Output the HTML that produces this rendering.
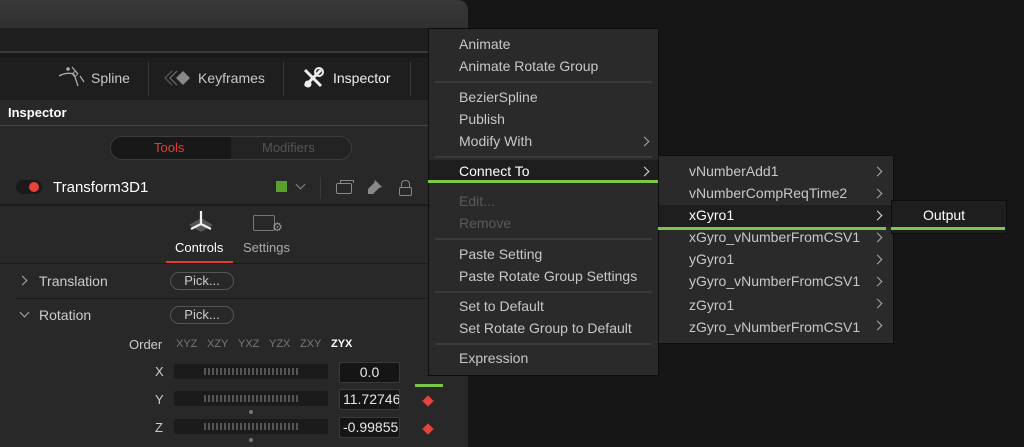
<!DOCTYPE html>
<html><head><style>
*{margin:0;padding:0;box-sizing:border-box}
body{width:1024px;height:447px;background:#161616;font-family:"Liberation Sans",sans-serif;position:relative;overflow:hidden;color:#ccc}
.a{position:absolute}
.t{position:absolute;font-size:14px;white-space:nowrap}
.menu{position:absolute;background:#2a2a2a;border:1px solid #0e0e0e}
.mi{position:absolute;font-size:14px;color:#c8c8c8;white-space:nowrap}
.sep{position:absolute;height:2px;background:#3a3a3a}
.chev{position:absolute;width:7px;height:7px;border-right:1.5px solid #aaa;border-top:1.5px solid #aaa;transform:rotate(45deg)}
.slider{position:absolute;left:174px;width:154px;height:15px;background:#1b1b1b;border-radius:2px}
.slider::after{content:"";position:absolute;left:30px;right:30px;top:4px;height:7px;background:repeating-linear-gradient(90deg,#555 0 2px,transparent 2px 4px)}
.num{position:absolute;left:339px;width:61px;height:21px;background:#151515;border:1px solid #3a3a3a;border-radius:2px;color:#e8e8e8;font-size:14px;padding-left:3px;line-height:19px;overflow:hidden;white-space:nowrap}
.ord{position:absolute;top:338px;font-size:11px;color:#777}
</style></head><body>
<div class="a" style="left:0;top:0;width:468px;height:28px;background:linear-gradient(#393939,#303030);border-top-right-radius:10px"></div>
<div class="a" style="left:0;top:28px;width:468px;height:24px;background:#1f1f1f"></div>
<div class="a" style="left:0;top:51px;width:468px;height:2px;background:#3a3a3a"></div>
<div class="a" style="left:0;top:53px;width:468px;height:5px;background:#191919"></div>
<div class="a" style="left:0;top:58px;width:468px;height:42px;background:#1e1e1e"></div>
<div class="a" style="left:0;top:100px;width:468px;height:347px;background:#282828"></div>
<!-- toolbar -->
<svg class="a" style="left:58px;top:64px" width="28" height="28" viewBox="0 0 28 28"><path d="M1 12 Q8 8 16 10 M16 10 L20 22 M14 3 L20 10 M22 12 L26 18" stroke="#aaa" stroke-width="1.3" fill="none"/><circle cx="10" cy="5" r="1.8" fill="#aaa"/><circle cx="17" cy="10" r="2.2" fill="none" stroke="#aaa"/></svg>
<div class="t" style="left:91px;top:70px;color:#c8c8c8">Spline</div>
<div class="a" style="left:148px;top:62px;width:1px;height:34px;background:#3a3a3a"></div>
<svg class="a" style="left:164px;top:70px" width="30" height="16" viewBox="0 0 30 16"><path d="M8 1 L1 8 L8 15" stroke="#555" fill="none" stroke-width="1.3"/><path d="M13 1 L6 8 L13 15" stroke="#666" fill="none" stroke-width="1.3"/><path d="M19 1 L26 8 L19 15 L12 8Z" fill="#888"/></svg>
<div class="t" style="left:198px;top:70px;color:#c8c8c8">Keyframes</div>
<div class="a" style="left:283px;top:62px;width:1px;height:34px;background:#3a3a3a"></div>
<svg class="a" style="left:302px;top:67px" width="22" height="22" viewBox="0 0 22 22"><path d="M3 3 L19 19 M19 3 L3 19" stroke="#eee" stroke-width="3"/><circle cx="17" cy="5" r="4" fill="none" stroke="#eee" stroke-width="2"/><circle cx="6" cy="17" r="3.5" fill="#eee"/></svg>
<div class="t" style="left:333px;top:70px;color:#eee">Inspector</div>
<div class="a" style="left:410px;top:62px;width:1px;height:34px;background:#3a3a3a"></div>
<!-- header -->
<div class="t" style="left:8px;top:105px;color:#fff;font-weight:bold;font-size:13px">Inspector</div>
<div class="a" style="left:0;top:125px;width:468px;height:1px;background:#8a2a22"></div>
<div class="a" style="left:110px;top:136px;width:242px;height:24px;border:1px solid #3c3c3c;border-radius:12px;background:#232323"></div>
<div class="a" style="left:111px;top:137px;width:120px;height:22px;border-radius:11px 0 0 11px;background:#181818"></div>
<div class="t" style="left:154px;top:140px;color:#e0402f;font-size:13px">Tools</div>
<div class="t" style="left:262px;top:140px;color:#555;font-size:13px">Modifiers</div>
<div class="a" style="left:16px;top:180px;width:26px;height:14px;border-radius:7px;background:#1a1a1a"></div>
<div class="a" style="left:29px;top:182px;width:10px;height:10px;border-radius:5px;background:#e8433a"></div>
<div class="t" style="left:53px;top:179px;color:#fff;font-size:15px">Transform3D1</div>
<div class="a" style="left:276px;top:181px;width:11px;height:11px;background:#5aa02c"></div>
<div class="chev" style="left:297px;top:181px;transform:rotate(135deg);border-color:#888"></div>
<div class="a" style="left:320px;top:177px;width:1px;height:22px;background:#3a3a3a"></div>
<div class="a" style="left:336px;top:183px;width:16px;height:11px;border:1.5px solid #888;border-radius:2px"></div>
<div class="a" style="left:340px;top:180px;width:14px;height:3px;border:1.5px solid #888;border-bottom:none"></div>
<svg class="a" style="left:366px;top:178px" width="18" height="18"><path d="M9 2 L16 9 L13 10 L7 16 L2 16 L2 11 L8 5Z" fill="#888"/></svg>
<div class="a" style="left:399px;top:187px;width:13px;height:9px;border:1.5px solid #888;border-radius:2px"></div>
<div class="a" style="left:401px;top:180px;width:9px;height:8px;border:1.5px solid #888;border-bottom:none;border-radius:4px 4px 0 0"></div>
<div class="a" style="left:0;top:204px;width:468px;height:2px;background:#1c1c1c"></div>
<svg class="a" style="left:186px;top:209px" width="30" height="24" viewBox="0 0 30 24"><path d="M3 16 L15 9 L27 16 L15 23Z" fill="#555"/><path d="M15 2 L15 15 M15 15 L5 20 M15 15 L25 20" stroke="#eee" stroke-width="2.2"/></svg>
<div class="a" style="left:253px;top:215px;width:22px;height:16px;border:1.5px solid #777;border-radius:2px"></div>
<div class="t" style="left:272px;top:220px;color:#999;font-size:12px">⚙</div>
<div class="t" style="left:175px;top:240px;color:#fff;font-size:13px">Controls</div>
<div class="t" style="left:243px;top:240px;color:#aaa;font-size:13px">Settings</div>
<div class="a" style="left:166px;top:261px;width:67px;height:2px;background:#e0402f"></div>
<div class="a" style="left:0;top:263px;width:468px;height:1px;background:#1c1c1c"></div>
<div class="chev" style="left:19px;top:277px;transform:rotate(45deg)"></div>
<div class="t" style="left:39px;top:273px;color:#ccc">Translation</div>
<div class="a" style="left:170px;top:272px;width:64px;height:18px;border:1px solid #555;border-radius:9px;color:#ccc;font-size:13px;text-align:center;line-height:16px">Pick...</div>
<div class="a" style="left:16px;top:298px;width:452px;height:1px;background:#1a1a1a"></div>
<div class="chev" style="left:21px;top:309px;transform:rotate(135deg)"></div>
<div class="t" style="left:39px;top:307px;color:#ccc">Rotation</div>
<div class="a" style="left:170px;top:306px;width:64px;height:18px;border:1px solid #555;border-radius:9px;color:#ccc;font-size:13px;text-align:center;line-height:16px">Pick...</div>
<div class="t" style="left:129px;top:337px;color:#ccc;font-size:13px">Order</div>
<div class="ord" style="left:176px">XYZ</div><div class="ord" style="left:207px">XZY</div><div class="ord" style="left:238px">YXZ</div><div class="ord" style="left:269px">YZX</div><div class="ord" style="left:300px">ZXY</div><div class="ord" style="left:331px;color:#fff;font-weight:bold">ZYX</div>
<div class="t" style="left:155px;top:364px;color:#ccc;font-size:13px">X</div>
<div class="slider" style="top:364px"></div><div class="num" style="top:362px;text-align:center;padding:0">0.0</div>
<div class="a" style="left:415px;top:384px;width:28px;height:3px;background:#7cc64a"></div>
<div class="t" style="left:155px;top:392px;color:#ccc;font-size:13px">Y</div>
<div class="slider" style="top:391px"></div><div class="num" style="top:389px">11.72746</div>
<div class="a" style="left:249px;top:410px;width:4px;height:4px;border-radius:2px;background:#777"></div>
<div class="a" style="left:424px;top:397px;width:8px;height:8px;background:#e8433a;transform:rotate(45deg)"></div>
<div class="t" style="left:155px;top:420px;color:#ccc;font-size:13px">Z</div>
<div class="slider" style="top:419px"></div><div class="num" style="top:417px">-0.998551</div>
<div class="a" style="left:249px;top:438px;width:4px;height:4px;border-radius:2px;background:#777"></div>
<div class="a" style="left:424px;top:425px;width:8px;height:8px;background:#e8433a;transform:rotate(45deg)"></div>

<!-- menu 1 -->
<div class="menu" style="left:428px;top:28px;width:231px;height:348px"></div>
<div class="mi" style="left:459px;top:36px">Animate</div>
<div class="mi" style="left:459px;top:58px">Animate Rotate Group</div>
<div class="sep" style="left:435px;top:81px;width:217px"></div>
<div class="mi" style="left:459px;top:89px">BezierSpline</div>
<div class="mi" style="left:459px;top:111px">Publish</div>
<div class="mi" style="left:459px;top:133px">Modify With</div>
<div class="chev" style="left:641px;top:138px"></div>
<div class="sep" style="left:435px;top:156px;width:217px"></div>
<div class="a" style="left:429px;top:160px;width:229px;height:20px;background:#1e1e1e"></div>
<div class="mi" style="left:459px;top:163px;color:#fff">Connect To</div>
<div class="chev" style="left:641px;top:168px;border-color:#ddd"></div>
<div class="a" style="left:428px;top:180px;width:231px;height:3px;background:#7cc64a"></div>
<div class="mi" style="left:459px;top:193px;color:#5a5a5a">Edit...</div>
<div class="mi" style="left:459px;top:215px;color:#5a5a5a">Remove</div>
<div class="sep" style="left:435px;top:238px;width:217px"></div>
<div class="mi" style="left:459px;top:246px">Paste Setting</div>
<div class="mi" style="left:459px;top:268px">Paste Rotate Group Settings</div>
<div class="sep" style="left:435px;top:291px;width:217px"></div>
<div class="mi" style="left:459px;top:298px">Set to Default</div>
<div class="mi" style="left:459px;top:320px">Set Rotate Group to Default</div>
<div class="sep" style="left:435px;top:343px;width:217px"></div>
<div class="mi" style="left:459px;top:350px">Expression</div>
<!-- menu 2 -->
<div class="menu" style="left:658px;top:155px;width:236px;height:189px"></div>
<div class="mi" style="left:689px;top:163px">vNumberAdd1</div><div class="chev" style="left:874px;top:168px"></div>
<div class="mi" style="left:689px;top:185px">vNumberCompReqTime2</div><div class="chev" style="left:874px;top:190px"></div>
<div class="a" style="left:659px;top:205px;width:234px;height:22px;background:#1e1e1e"></div>
<div class="mi" style="left:689px;top:207px;color:#fff">xGyro1</div><div class="chev" style="left:874px;top:212px;border-color:#ddd"></div>
<div class="a" style="left:658px;top:227px;width:228px;height:3px;background:#7cc64a"></div>
<div class="mi" style="left:689px;top:229px">xGyro_vNumberFromCSV1</div><div class="chev" style="left:874px;top:234px"></div>
<div class="mi" style="left:689px;top:251px">yGyro1</div><div class="chev" style="left:874px;top:256px"></div>
<div class="mi" style="left:689px;top:273px">yGyro_vNumberFromCSV1</div><div class="chev" style="left:874px;top:278px"></div>
<div class="mi" style="left:689px;top:297px">zGyro1</div><div class="chev" style="left:874px;top:300px"></div>
<div class="mi" style="left:689px;top:319px">zGyro_vNumberFromCSV1</div><div class="chev" style="left:874px;top:322px"></div>
<!-- menu 3 -->
<div class="menu" style="left:891px;top:200px;width:116px;height:34px;background:#1e1e1e"></div>
<div class="mi" style="left:923px;top:207px;color:#fff">Output</div>
<div class="a" style="left:891px;top:227px;width:114px;height:3px;background:#7cc64a"></div>
</body></html>
